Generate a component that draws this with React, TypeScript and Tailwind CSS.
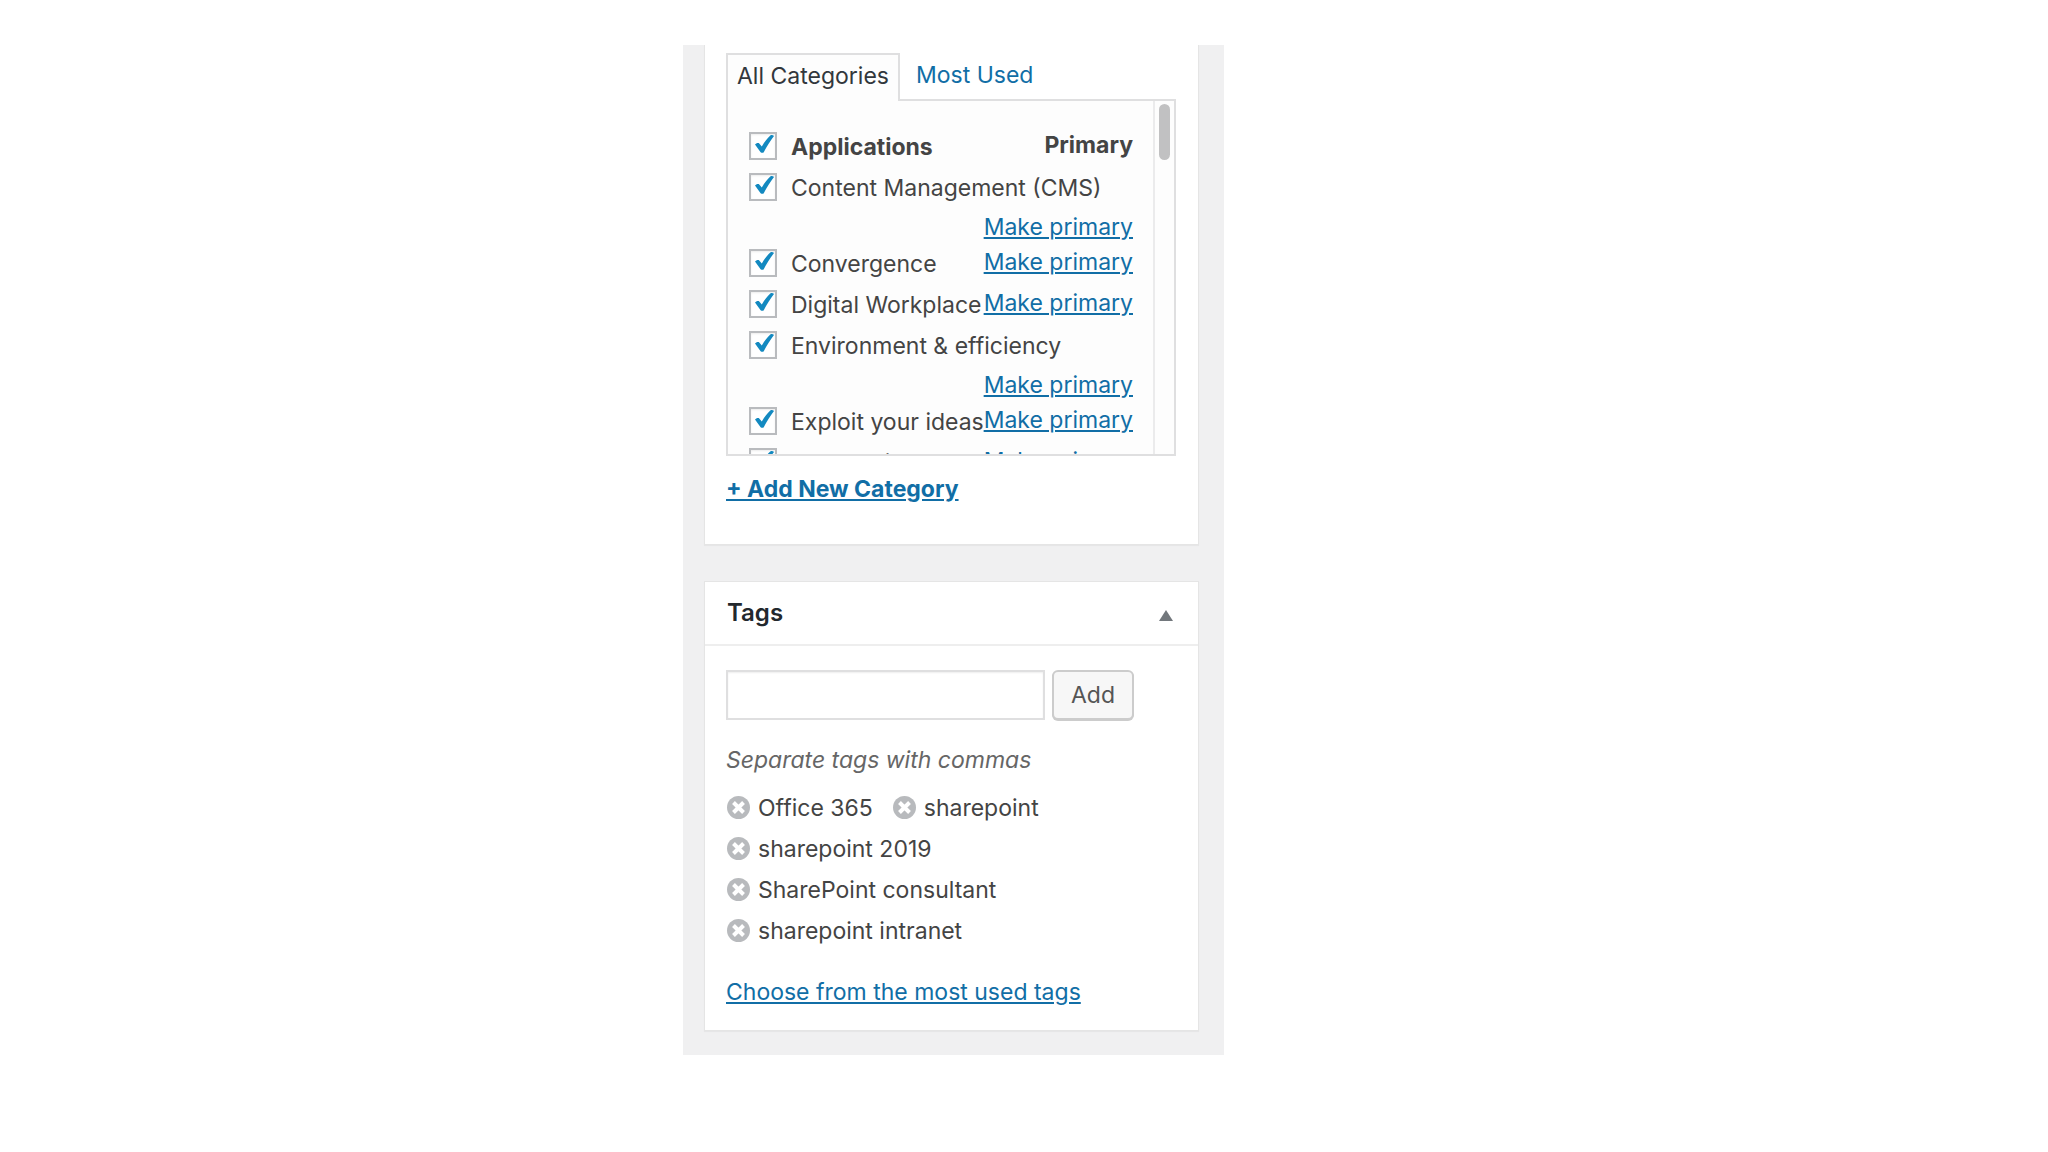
import { useState } from 'react'

type Category = { name: string; primary?: boolean }

const CATEGORIES: Category[] = [
  { name: 'Applications', primary: true },
  { name: 'Content Management (CMS)' },
  { name: 'Convergence' },
  { name: 'Digital Workplace' },
  { name: 'Environment & efficiency' },
  { name: 'Exploit your ideas' },
  { name: 'Our services' },
]

const TAGS = ['Office 365', 'sharepoint', 'sharepoint 2019', 'SharePoint consultant', 'sharepoint intranet']

function CheckBox({ checked, onChange }: { checked: boolean; onChange: () => void }) {
  return (
    <span className="relative size-7 shrink-0">
      <input
        type="checkbox"
        checked={checked}
        onChange={onChange}
        className="block size-7 appearance-none border-2 border-[#b9bbbe] bg-white shadow-[inset_0_1px_2px_rgba(0,0,0,0.08)]"
      />
      {checked && (
        <svg viewBox="0 0 28 28" className="pointer-events-none absolute inset-0 size-7" fill="#1389c0">
          <path d="M6 12.4 C7 11.2 8.4 10.6 9.8 11 L12.8 14.6 C15 10.4 18 6.4 21.6 3.2 C22.8 2.8 24.2 3 25 4 C21.4 8.8 17.8 14.4 14.6 20.4 C13.6 21 12.4 20.8 11.6 20.2 Z" />
        </svg>
      )}
    </span>
  )
}

function RemoveIcon() {
  return (
    <svg viewBox="0 0 22 22" className="size-[23px]" aria-hidden="true">
      <circle cx="11" cy="11" r="11" fill="#b8babd" />
      <path d="M6.2 6.2 L15.8 15.8 M15.8 6.2 L6.2 15.8" stroke="#fff" strokeWidth="3.8" />
    </svg>
  )
}

export default function App() {
  const [unchecked, setUnchecked] = useState<string[]>([])
  const [tags, setTags] = useState(TAGS)
  const [newTag, setNewTag] = useState('')
  const [open, setOpen] = useState(true)

  const toggle = (name: string) =>
    setUnchecked((u) => (u.includes(name) ? u.filter((n) => n !== name) : [...u, name]))

  const addTag = () => {
    const names = newTag.split(',').map((t) => t.trim()).filter(Boolean)
    setTags([...tags, ...names])
    setNewTag('')
  }

  return (
    <div className="bg-white pt-[45px] font-['Inter',sans-serif] text-[23px] leading-8 text-[#444]">
      <aside className="ml-[683px] max-w-[541px] bg-[#f0f0f1] pr-[25px] pb-6 pl-[21px]">
        {/* Categories */}
        <section className="border border-t-0 border-[#e5e5e5] bg-white pt-2 pr-[22px] pb-[39px] pl-[21px] shadow-[0_1px_1px_rgba(0,0,0,0.04)]">
          <div className="flex">
            <button className="z-10 -mb-0.5 h-12 border-2 border-b-0 border-[#dfdfe0] bg-[#fdfdfd] px-[9px] pb-1 text-[#32373c]">
              All Categories
            </button>
            <button className="h-[46px] px-4 pb-0.5 text-[#116ea6]">Most Used</button>
          </div>
          <div className="flex h-[357px] border-2 border-[#dfdfe0] bg-[#fdfdfd]">
            <ul className="flex-1 overflow-y-auto pt-[31px] pr-5 pl-[21px] [scrollbar-width:none]">
              {CATEGORIES.map((c) => (
                <li key={c.name} className="flex flex-wrap">
                  <label
                    className={
                      c.primary
                        ? 'mr-auto flex h-[41px] gap-3.5 leading-[30px] font-bold'
                        : 'mr-auto flex h-[41px] gap-3.5 leading-[30px]'
                    }
                  >
                    <CheckBox checked={!unchecked.includes(c.name)} onChange={() => toggle(c.name)} />
                    {c.name}
                  </label>
                  {/* grows so that a wrapped action stays on the right */}
                  {c.primary ? (
                    <span className="-ml-1 h-[35px] grow text-right leading-[26px] font-bold">Primary</span>
                  ) : (
                    <span className="-ml-1 h-[35px] grow text-right leading-[26px]">
                      <a href="#" className="text-[#116ea6] underline">Make primary</a>
                    </span>
                  )}
                </li>
              ))}
            </ul>
            <div className="w-[21px] border-l-2 border-[#ebebec] pt-[3px] pl-1">
              <div className="h-14 w-[11px] rounded-full bg-[#c1c1c2]" />
            </div>
          </div>
          <a href="#" className="mt-[17px] inline-block font-bold text-[#116ea6] underline">+ Add New Category</a>
        </section>

        {/* Tags */}
        <section className="mt-9 border border-[#e5e5e5] bg-white shadow-[0_1px_1px_rgba(0,0,0,0.04)]">
          <div className="flex h-16 items-center justify-between border-b-2 border-[#eee] px-[22px]">
            <h2 className="text-2xl font-semibold text-[#23282d]">Tags</h2>
            <button aria-label="Toggle tags panel" onClick={() => setOpen(!open)} className="mt-1 mr-[3px]">
              <svg viewBox="0 0 14 11" className="h-[11px] w-3.5" fill="#72777c">
                <path d="M7 0 L14 11 H0 Z" />
              </svg>
            </button>
          </div>
          {open && (
            <div className="px-[21px] pt-6 pb-[22px]">
              <div className="flex gap-[7px]">
                <input
                  aria-label="Add new tag"
                  value={newTag}
                  onChange={(e) => setNewTag(e.target.value)}
                  className="h-[50px] w-[319px] border-2 border-[#dfdfe0] bg-white px-2 shadow-[inset_0_1px_2px_rgba(0,0,0,0.07)]"
                />
                <button
                  onClick={addTag}
                  className="h-[50px] w-[82px] rounded-md border-2 border-[#ccc] bg-[#f7f7f7] text-[#555] shadow-[0_1px_0_#ccc]"
                >
                  Add
                </button>
              </div>
              <p className="mt-6 text-[#666] italic">Separate tags with commas</p>
              <ul className="mt-[11px] flex flex-wrap gap-x-5 pl-px">
                {tags.map((t) => (
                  <li key={t} className="flex h-[41px] items-center gap-2">
                    <button aria-label={`Remove tag ${t}`} onClick={() => setTags(tags.filter((x) => x !== t))}>
                      <RemoveIcon />
                    </button>
                    {t}
                  </li>
                ))}
              </ul>
              <a href="#" className="mt-[25px] inline-block text-[#116ea6] underline">Choose from the most used tags</a>
            </div>
          )}
        </section>
      </aside>
    </div>
  )
}
